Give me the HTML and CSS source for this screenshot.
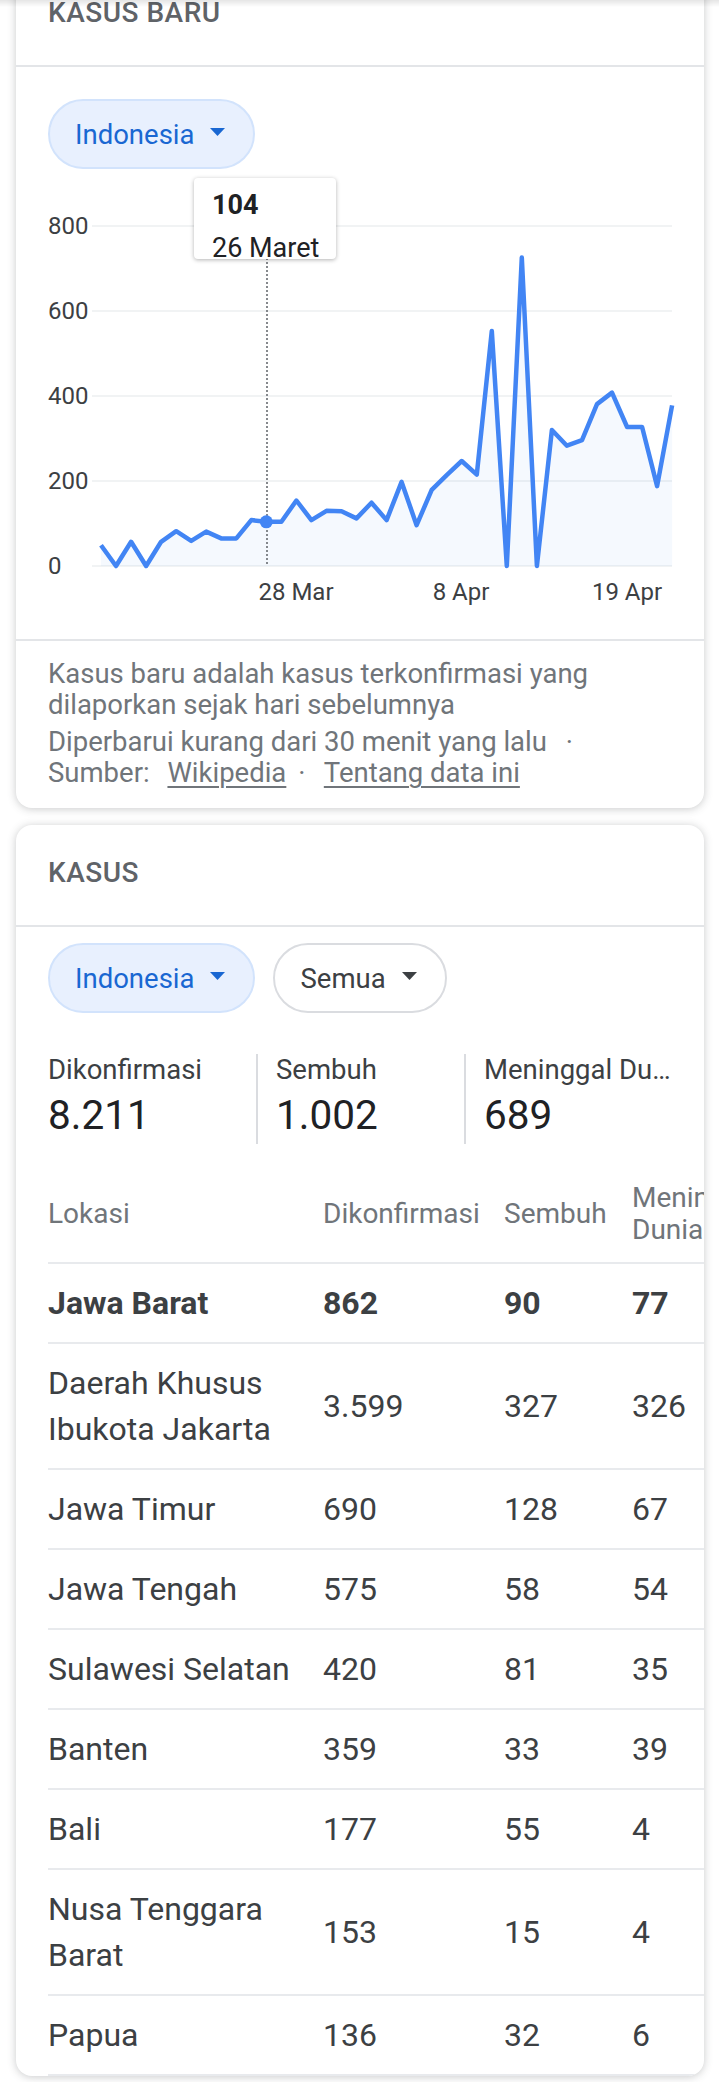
FILE: index.html
```html
<!DOCTYPE html>
<html lang="id">
<head>
<meta charset="utf-8">
<title>Kasus COVID-19 Indonesia</title>
<link rel="stylesheet" href="styles.css">
</head>
<body>
<div class="page">
  <section class="card">
    <h2 class="card-title">KASUS BARU</h2>
    <div class="filters filters-first">
      <div class="chip chip-active">Indonesia<svg viewBox="0 0 15 8"><polygon points="0,0 15,0 7.5,8"/></svg></div>
    </div>
    <div class="chart">
      <svg class="chart-svg" width="688" height="470" viewBox="0 0 688 470">
        <g class="grid">
          <line x1="76" y1="57" x2="656" y2="57"/>
          <line x1="76" y1="142" x2="656" y2="142"/>
          <line x1="76" y1="227" x2="656" y2="227"/>
          <line x1="76" y1="312" x2="656" y2="312"/>
          <line x1="76" y1="397" x2="656" y2="397"/>
        </g>
        <g class="ylab">
          <text x="32" y="65">800</text>
          <text x="32" y="150">600</text>
          <text x="32" y="235">400</text>
          <text x="32" y="320">200</text>
          <text x="32" y="405">0</text>
        </g>
        <g class="xlab">
          <text x="280" y="431">28 Mar</text>
          <text x="445" y="431">8 Apr</text>
          <text x="611" y="431">19 Apr</text>
        </g>
        <polygon class="area" points="85.0,376.2 100.0,397 115.1,372.8 130.1,397 145.1,372.8 160.2,362.2 175.2,371.9 190.2,362.6 205.2,369.4 220.3,369.4 235.3,351.1 250.3,352.8 265.4,352.8 280.4,331.5 295.4,351.1 310.5,341.8 325.5,342.2 340.5,349.4 355.5,333.7 370.6,351.1 385.6,312.9 400.6,356.2 415.7,320.9 430.7,306.1 445.7,292.0 460.8,305.6 475.8,162.0 490.8,397 505.8,88.5 520.9,397 535.9,261.0 550.9,276.7 566.0,271.2 581.0,235.1 596.0,223.6 611.1,258.0 626.1,258.0 641.1,317.1 656.1,236.4 656.1,397 85,397"/>
        <line class="cursor" x1="251" y1="89" x2="251" y2="397"/>
        <polyline class="series" points="85.0,376.2 100.0,397 115.1,372.8 130.1,397 145.1,372.8 160.2,362.2 175.2,371.9 190.2,362.6 205.2,369.4 220.3,369.4 235.3,351.1 250.3,352.8 265.4,352.8 280.4,331.5 295.4,351.1 310.5,341.8 325.5,342.2 340.5,349.4 355.5,333.7 370.6,351.1 385.6,312.9 400.6,356.2 415.7,320.9 430.7,306.1 445.7,292.0 460.8,305.6 475.8,162.0 490.8,397 505.8,88.5 520.9,397 535.9,261.0 550.9,276.7 566.0,271.2 581.0,235.1 596.0,223.6 611.1,258.0 626.1,258.0 641.1,317.1 656.1,236.4"/>
        <circle class="marker" cx="250.3" cy="352.8" r="6.5"/>
      </svg>
      <div class="tooltip">
        <div class="tt-val">104</div>
        <div class="tt-date">26 Maret</div>
      </div>
    </div>
    <div class="card-foot">
      <p>Kasus baru adalah kasus terkonfirmasi yang dilaporkan sejak hari sebelumnya</p>
      <p>Diperbarui kurang dari 30 menit yang lalu&nbsp;<span class="sep">·</span> <span class="nw">Sumber: <a class="lnk" href="#">Wikipedia</a></span><span class="sep">·</span> <a class="lnk lnk-plain" href="#">Tentang data ini</a></p>
    </div>
  </section>

  <section class="card">
    <h2 class="card-title">KASUS</h2>
    <div class="filters filters-second">
      <div class="chip chip-active">Indonesia<svg viewBox="0 0 15 8"><polygon points="0,0 15,0 7.5,8"/></svg></div>
      <div class="chip">Semua<svg viewBox="0 0 15 8"><polygon points="0,0 15,0 7.5,8"/></svg></div>
    </div>
    <div class="stats">
      <div class="stat">
        <div class="stat-label">Dikonfirmasi</div>
        <div class="stat-num">8.211</div>
      </div>
      <div class="stat">
        <div class="stat-label">Sembuh</div>
        <div class="stat-num">1.002</div>
      </div>
      <div class="stat">
        <div class="stat-label">Meninggal Dunia</div>
        <div class="stat-num">689</div>
      </div>
    </div>
    <div class="table-wrap">
      <table class="cases">
        <colgroup>
          <col class="c-loc">
          <col class="c-conf">
          <col class="c-rec">
          <col class="c-death">
        </colgroup>
        <thead>
          <tr><th>Lokasi</th><th>Dikonfirmasi</th><th>Sembuh</th><th>Meninggal Dunia</th></tr>
        </thead>
        <tbody>
          <tr class="bold"><td>Jawa Barat</td><td>862</td><td>90</td><td>77</td></tr>
          <tr><td>Daerah Khusus Ibukota Jakarta</td><td>3.599</td><td>327</td><td>326</td></tr>
          <tr><td>Jawa Timur</td><td>690</td><td>128</td><td>67</td></tr>
          <tr><td>Jawa Tengah</td><td>575</td><td>58</td><td>54</td></tr>
          <tr><td>Sulawesi Selatan</td><td>420</td><td>81</td><td>35</td></tr>
          <tr><td>Banten</td><td>359</td><td>33</td><td>39</td></tr>
          <tr><td>Bali</td><td>177</td><td>55</td><td>4</td></tr>
          <tr><td>Nusa Tenggara Barat</td><td>153</td><td>15</td><td>4</td></tr>
          <tr><td>Papua</td><td>136</td><td>32</td><td>6</td></tr>
        </tbody>
      </table>
    </div>
  </section>
</div>
</body>
</html>
```

FILE: styles.css
```css
* { box-sizing: border-box; }
html, body { margin: 0; padding: 0; }
body {
  background: #ffffff;
  font-family: Roboto, "Liberation Sans", Arial, sans-serif;
  color: #3c4043;
}
body::before {
  content: "";
  position: fixed;
  top: 0; left: 0; right: 0;
  height: 7px;
  background: linear-gradient(rgba(0,0,0,0.10), rgba(0,0,0,0));
  z-index: 5;
}
.page {
  margin-top: -35px;
  padding: 0 15px 40px 16px;
}
.card {
  background: #fff;
  border-radius: 16px;
  box-shadow: 0 1px 8px rgba(60,64,67,0.28);
  overflow: hidden;
}
.card + .card { margin-top: 17px; }
.card-title {
  margin: 0;
  padding: 28px 32px 32px;
  font-size: 28px;
  line-height: 40px;
  font-weight: 500;
  letter-spacing: 0.5px;
  color: #5f6368;
  border-bottom: 2px solid #e3e5e8;
}

/* filter chips */
.filters { display: flex; gap: 18px; padding: 32px 32px 0; }
.filters-second { padding-top: 16px; }
.chip {
  height: 70px;
  display: inline-flex;
  align-items: center;
  gap: 16px;
  padding: 0 28px 0 25px;
  border-radius: 35px;
  border: 2px solid #dadce0;
  background: #fff;
  font-size: 27.5px;
  color: #3c4043;
}
.chip-active {
  background: #e8f0fe;
  border-color: #d2e3fc;
  color: #1967d2;
}
.chip svg { width: 15px; height: 8px; margin-bottom: 5px; fill: currentColor; }

/* chart */
.chart { position: relative; height: 470px; }
.chart-svg { display: block; }
.chart-svg text {
  font-family: Roboto, "Liberation Sans", Arial, sans-serif;
  font-size: 24px;
  fill: #3c4043;
}
.xlab text { text-anchor: middle; }
.grid line { stroke: #f1f3f4; stroke-width: 2; }
.area { fill: #4285f4; fill-opacity: 0.05; }
.series { fill: none; stroke: #4285f4; stroke-width: 4.5; stroke-linejoin: round; }
.cursor { stroke: #5f6368; stroke-width: 1.5; stroke-dasharray: 2 2; }
.marker { fill: #4285f4; }
.tooltip {
  position: absolute;
  left: 178px;
  top: 9px;
  width: 142px;
  height: 81px;
  background: #fff;
  border-radius: 4px;
  box-shadow: 0 1px 4px rgba(0,0,0,0.3);
  padding: 6px 0 0 18px;
  font-size: 27px;
  line-height: 43px;
  color: #202124;
  overflow: hidden;
}
.tt-val { font-weight: 700; }

/* footer */
.card-foot {
  border-top: 2px solid #e3e5e8;
  padding: 17px 32px 20px;
  font-size: 27.5px;
  line-height: 31px;
  color: #70757a;
}
.card-foot p { margin: 0; }
.card-foot p + p { margin-top: 6px; }
.sep { margin: 0 12px; }
.nw { white-space: nowrap; }
.lnk {
  color: inherit;
  text-decoration: underline;
  text-underline-offset: 4px;
  text-decoration-thickness: 2px;
  margin-left: 11px;
}
.lnk-plain { margin-left: 0; }

/* stats */
.stats {
  display: grid;
  grid-template-columns: 208px 208px 1fr;
  margin: 41px 25px 0 32px;
}
.stat { min-width: 0; padding-left: 18px; border-left: 2px solid #dadce0; }
.stat:first-child { padding-left: 0; border-left: 0; }
.stat-label {
  font-size: 27.5px;
  line-height: 32px;
  color: #3c4043;
  white-space: nowrap;
  overflow: hidden;
  text-overflow: ellipsis;
}
.stat-num { font-size: 40.5px; line-height: 58px; color: #202124; }

/* table */
.table-wrap { margin: 22px 0 0 32px; overflow: hidden; }
.cases { border-collapse: collapse; table-layout: fixed; width: 740px; }
.c-loc { width: 275px; }
.c-conf { width: 181px; }
.c-rec { width: 128px; }
.c-death { width: 156px; }
.cases th {
  font-weight: 400;
  font-size: 28px;
  line-height: 32px;
  color: #70757a;
  text-align: left;
  vertical-align: middle;
  padding: 16px 0;
  border-bottom: 2px solid #e8eaed;
}
.cases td {
  font-size: 32px;
  line-height: 46px;
  padding: 16px 0;
  border-bottom: 2px solid #e8eaed;
  vertical-align: middle;
  color: #3c4043;
}
.cases th:first-child, .cases td:first-child { padding-right: 20px; }
.cases th:last-child, .cases td:last-child { padding-right: 16px; }
.cases tr.bold td { font-weight: 700; }
```
